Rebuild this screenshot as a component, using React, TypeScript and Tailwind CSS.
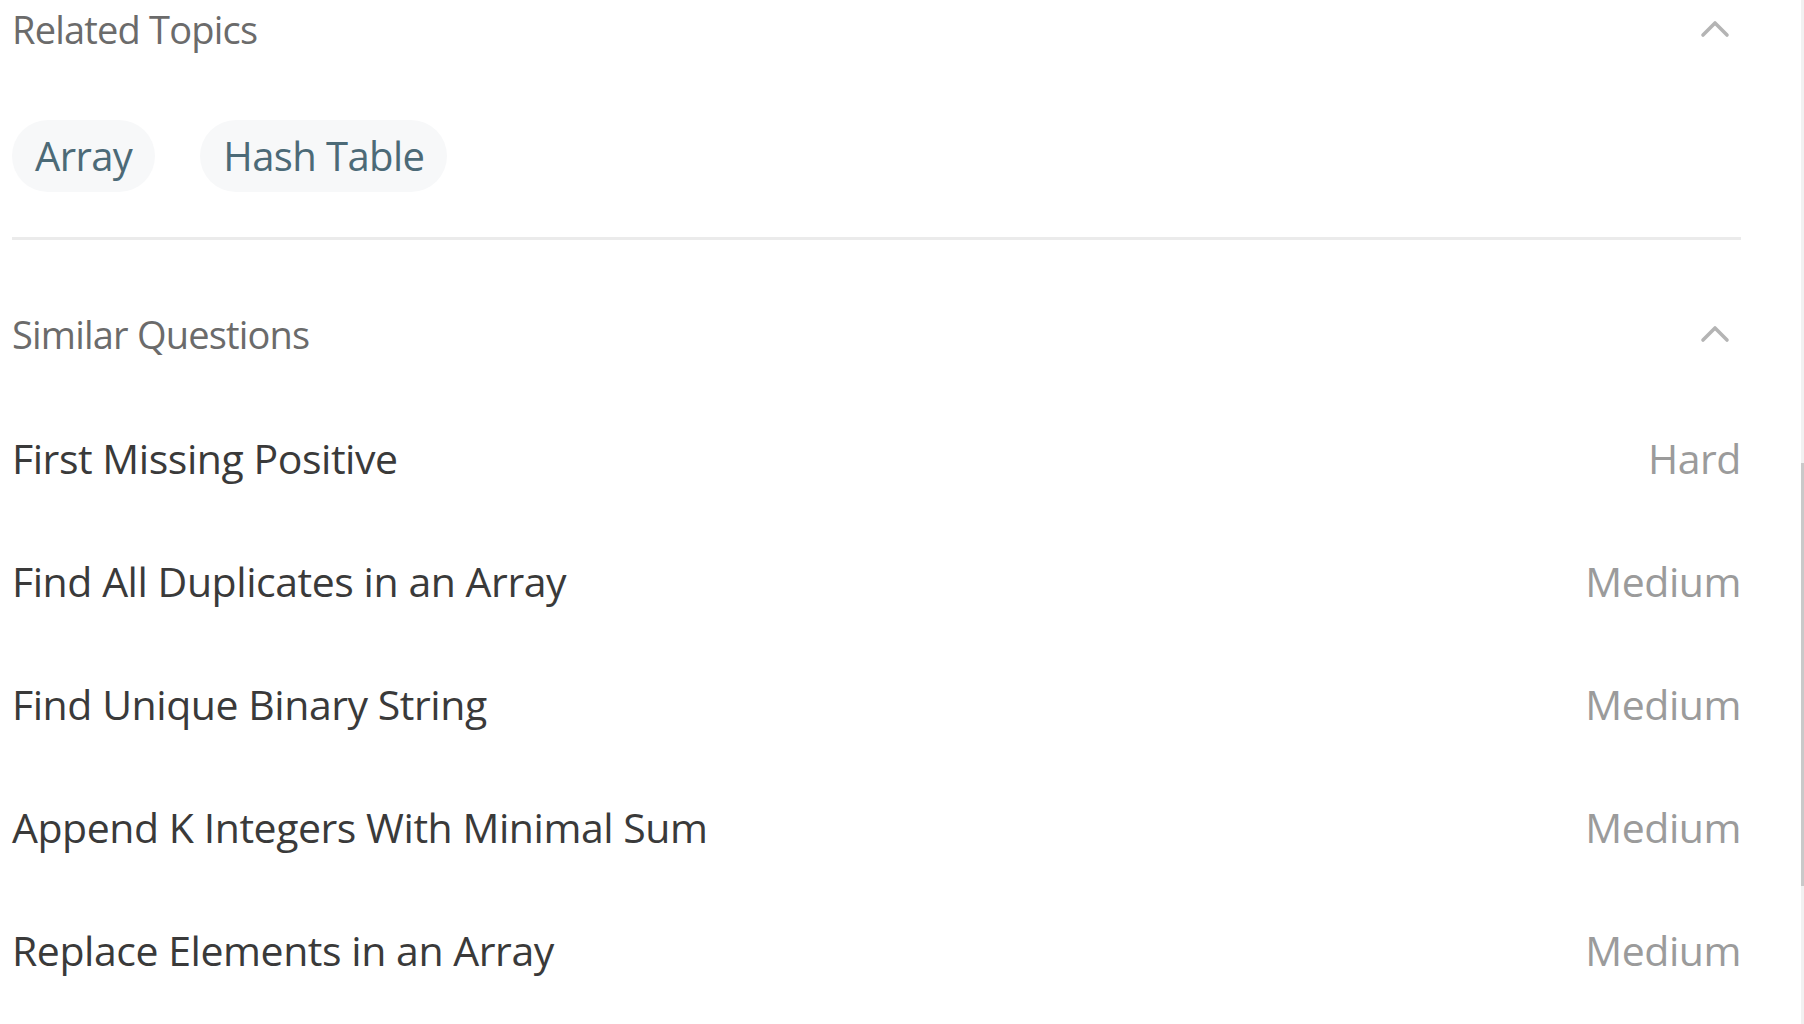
const questions = [
  { title: "First Missing Positive", level: "Hard" },
  { title: "Find All Duplicates in an Array", level: "Medium" },
  { title: "Find Unique Binary String", level: "Medium" },
  { title: "Append K Integers With Minimal Sum", level: "Medium" },
  { title: "Replace Elements in an Array", level: "Medium" },
];

const topics = ["Array", "Hash Table"];

function Chevron() {
  return (
    <svg width="30" height="20" viewBox="0 0 30 20" className="mr-[11px]">
      <polyline points="3,16 15,4 27,16" fill="none" stroke="#b4b4b4" strokeWidth="3.6" strokeLinecap="round" strokeLinejoin="round" />
    </svg>
  );
}

function SectionHeader({ title }: { title: string }) {
  return (
    <div className="flex h-[58px] items-center justify-between">
      <span className="text-[38px] leading-none tracking-[-0.8px] text-[#6b6b6b]">{title}</span>
      <Chevron />
    </div>
  );
}

export default function App() {
  return (
    <div className="relative h-[1024px] w-full overflow-hidden bg-white font-['Open_Sans',sans-serif]">
      <div className="ml-[12px] w-[1729px]">
        <SectionHeader title="Related Topics" />

        <div className="mt-[62px] flex gap-[45px]">
          {topics.map((t) => (
            <div key={t} className="flex h-[72px] items-center rounded-full bg-[#f7f8f9] px-[23px] text-[40px] tracking-[-0.6px] text-[#4c6a77]">
              {t}
            </div>
          ))}
        </div>

        <div className="mt-[45px] h-[3px] bg-[#ebebeb]" />

        <div className="mt-[65px]">
          <SectionHeader title="Similar Questions" />
        </div>

        <div className="mt-[34px]">
          {questions.map((q) => (
            <div key={q.title} className="flex h-[123px] items-center justify-between">
              <span className="text-[41px] leading-none tracking-[-0.45px] text-[#3a3a3a]">{q.title}</span>
              <span className="text-[41px] leading-none tracking-[-0.45px] text-[#9b9b9b]">{q.level}</span>
            </div>
          ))}
        </div>
      </div>

      {/* scrollbar */}
      <div className="absolute right-0 top-0 h-full w-[3px] bg-[#f1f1f1]">
        <div className="mt-[463px] h-[423px] w-full bg-[#c9c9c9]" />
      </div>
    </div>
  );
}
